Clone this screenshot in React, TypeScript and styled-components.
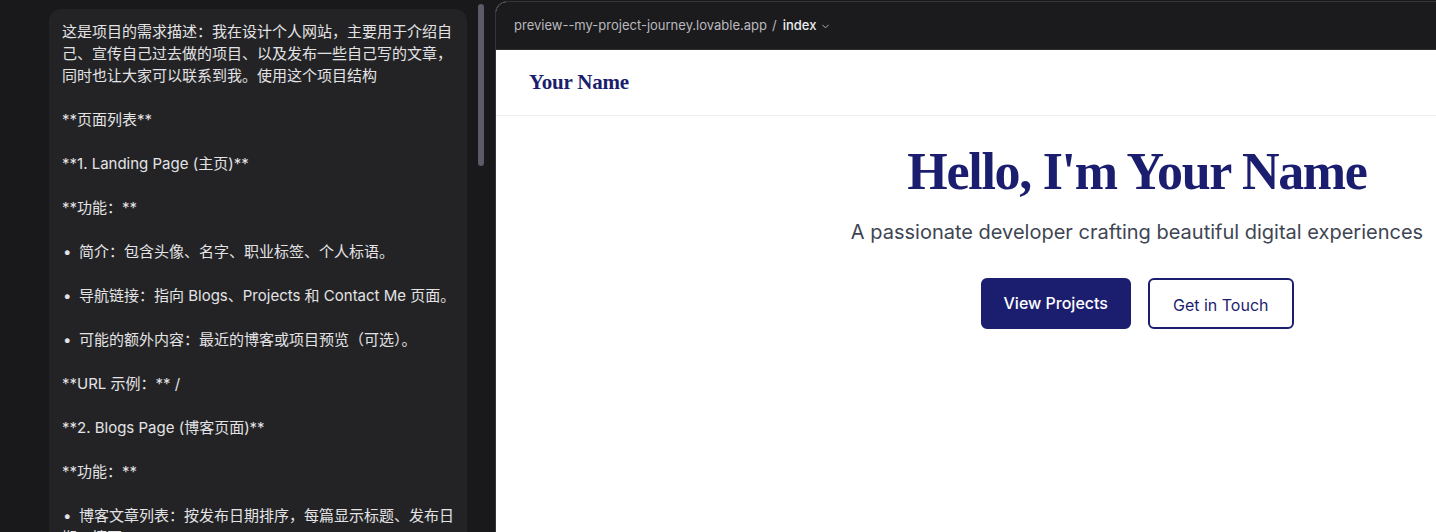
import React from "react";
import styled, { createGlobalStyle } from "styled-components";
import { ChevronDown } from "lucide-react";

const Global = createGlobalStyle`
  html, body { margin: 0; padding: 0; background: #19191b; overflow: hidden; }
  * { box-sizing: border-box; }
`;

const navy = "#1b1e6e";

const Shell = styled.div`
  display: flex;
  height: 532px;
  width: 1436px;
  overflow: hidden;
  background: #19191b;
`;

const ChatColumn = styled.div`
  flex: 0 0 495px;
  display: flex;
  height: 100%;
  overflow: hidden;
`;

const MessageArea = styled.div`
  flex: 1;
  padding: 9px 0 0 49px;
`;

const Bubble = styled.div`
  width: 418px;
  background: #232325;
  border-radius: 12px;
  padding: 12px 8px 40px 13px;
  color: #e3e3e6;
  font-family: "Inter", "Noto Sans CJK SC", sans-serif;
  font-size: 15px;
  line-height: 22px;
`;

const Para = styled.p`
  margin: 0 0 22px;
`;

const Bullet = styled.span`
  display: inline-block;
  width: 17px;
  padding-left: 1px;
`;

const ScrollTrack = styled.div`
  flex: 0 0 28px;
  padding: 4px 0 0 11px;
`;

const ScrollThumb = styled.div`
  width: 6px;
  height: 162px;
  border-radius: 3px;
  background: #5b5b67;
`;

const Preview = styled.div`
  flex: 0 0 1283px;
  margin-top: 1px;
  border-top: 1px solid #34343a;
  border-left: 1px solid #34343a;
  border-top-left-radius: 12px;
  overflow: hidden;
  display: flex;
  flex-direction: column;
  background: #ffffff;
`;

const TopBar = styled.div`
  height: 48px;
  background: #1b1b1d;
  border-bottom: 1px solid #2d2d32;
  display: flex;
  align-items: center;
  padding: 0 0 1px 18px;
  font-family: "Inter", sans-serif;
  font-size: 13px;
  color: #b9b9be;
  gap: 5px;
`;

const Crumb = styled.span`
  color: #ececef;
  font-weight: 500;
  margin-left: 1px;
`;

const Chevron = styled.span`
  display: inline-flex;
  color: #b9b9be;
  margin-top: 2px;
  margin-left: -1px;
`;

const SiteNav = styled.nav`
  height: 66px;
  border-bottom: 1px solid #eeeef1;
  display: flex;
  align-items: center;
  padding: 0 0 0 33px;
`;

const Brand = styled.div`
  font-family: "Liberation Serif", serif;
  font-weight: 700;
  font-size: 21px;
  color: ${navy};
  letter-spacing: -0.2px;
`;

const Hero = styled.section`
  display: flex;
  flex-direction: column;
  align-items: center;
  padding-top: 25px;
`;

const Title = styled.h1`
  margin: 0;
  font-family: "Liberation Serif", serif;
  font-weight: 700;
  font-size: 52px;
  line-height: 62px;
  letter-spacing: -1.3px;
  color: ${navy};
`;

const Subtitle = styled.p`
  margin: 15px 0 0;
  font-family: "Inter", sans-serif;
  font-size: 20px;
  line-height: 28px;
  color: #3e4553;
`;

const Actions = styled.div`
  display: flex;
  gap: 17px;
  margin-top: 32px;
`;

const Button = styled.button<{ $variant: "solid" | "outline" }>`
  font-family: "Inter", sans-serif;
  font-size: 16px;
  font-weight: ${(p) => (p.$variant === "solid" ? 500 : 400)};
  height: 51px;
  padding: ${(p) => (p.$variant === "solid" ? "0 21px 2px" : "2px 23px 0")};
  border-radius: 6px;
  border: 2px solid ${navy};
  background: ${(p) => (p.$variant === "solid" ? navy : "#ffffff")};
  color: ${(p) => (p.$variant === "solid" ? "#ffffff" : navy)};
  cursor: pointer;
`;

const blocks: { bullet?: boolean; text: string }[] = [
  {
    text:
      "这是项目的需求描述：我在设计个人网站，主要用于介绍自己、宣传自己过去做的项目、以及发布一些自己写的文章，同时也让大家可以联系到我。使用这个项目结构",
  },
  { text: "**页面列表**" },
  { text: "**1. Landing Page (主页)**" },
  { text: "**功能：**" },
  { bullet: true, text: "简介：包含头像、名字、职业标签、个人标语。" },
  { bullet: true, text: "导航链接：指向 Blogs、Projects 和 Contact Me 页面。" },
  { bullet: true, text: "可能的额外内容：最近的博客或项目预览（可选）。" },
  { text: "**URL 示例：** /" },
  { text: "**2. Blogs Page (博客页面)**" },
  { text: "**功能：**" },
  { bullet: true, text: "博客文章列表：按发布日期排序，每篇显示标题、发布日期、摘要。" },
];

export default function App() {
  return (
    <>
      <Global />
      <Shell>
        <ChatColumn>
          <MessageArea>
            <Bubble>
              {blocks.map((b, i) => (
                <Para key={i}>
                  {b.bullet && <Bullet>•</Bullet>}
                  {b.text}
                </Para>
              ))}
            </Bubble>
          </MessageArea>
          <ScrollTrack>
            <ScrollThumb />
          </ScrollTrack>
        </ChatColumn>
        <Preview>
          <TopBar>
            <span>preview--my-project-journey.lovable.app</span>
            <span>/</span>
            <Crumb>index</Crumb>
            <Chevron>
              <ChevronDown size={11} strokeWidth={2} />
            </Chevron>
          </TopBar>
          <SiteNav>
            <Brand>Your Name</Brand>
          </SiteNav>
          <Hero>
            <Title>Hello, I'm Your Name</Title>
            <Subtitle>A passionate developer crafting beautiful digital experiences</Subtitle>
            <Actions>
              <Button $variant="solid">View Projects</Button>
              <Button $variant="outline">Get in Touch</Button>
            </Actions>
          </Hero>
        </Preview>
      </Shell>
    </>
  );
}
